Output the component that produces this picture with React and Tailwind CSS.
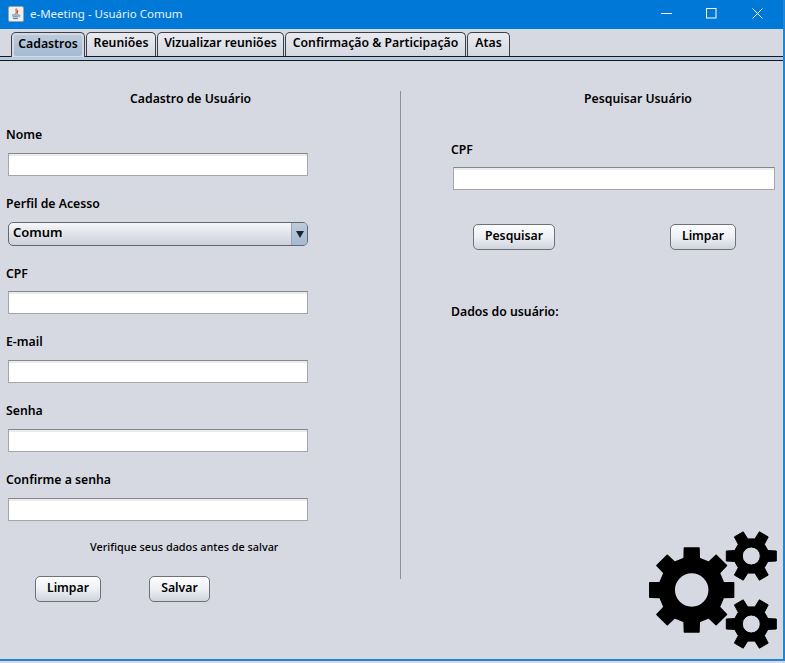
import React from 'react';

const font = "font-['Noto_Sans','Open_Sans',sans-serif]";

// gear outline, teeth are trapezoids around a root circle
const gearPath = (cx, cy, teeth, outer, root, hole, start, tip, base) => {
    const pts = [];
    const step = (Math.PI * 2) / teeth;
    for (let i = 0; i < teeth; i++) {
        const a = i * step + start;
        const w = step * tip;
        const b = step * base;
        pts.push([a - b, root], [a - w, outer], [a + w, outer], [a + b, root]);
    }
    const xy = pts.map(([a, r]) => `${(cx + Math.cos(a) * r).toFixed(1)} ${(cy + Math.sin(a) * r).toFixed(1)}`);
    return `M${xy.join('L')}Z M${cx - hole} ${cy}a${hole} ${hole} 0 1 0 ${hole * 2} 0a${hole} ${hole} 0 1 0 ${-hole * 2} 0Z`;
};

const Gears = () => (
    <svg width="135" height="125" viewBox="0 0 135 125" className="block" aria-hidden="true">
        <path fillRule="evenodd" strokeLinejoin="round" stroke="#000" strokeWidth="1.5" d={gearPath(43.7, 62, 8, 42.5, 32.5, 17.5, 0, 0.22, 0.3)} fill="#000" />
        <path fillRule="evenodd" strokeLinejoin="round" stroke="#000" strokeWidth="1" d={gearPath(103.3, 28, 6, 25.5, 17.5, 9, 0, 0.19, 0.3)} fill="#000" />
        <path fillRule="evenodd" strokeLinejoin="round" stroke="#000" strokeWidth="1" d={gearPath(103.3, 96, 6, 25.5, 17.5, 9, 0, 0.19, 0.3)} fill="#000" />
    </svg>
);

const JavaIcon = () => (
    <svg width="16" height="16" viewBox="0 0 16 16" className="block" aria-hidden="true">
        <rect x="0.5" y="0.5" width="15" height="15" rx="1.5" fill="#eef0f2" stroke="#9aa4ad" />
        <path d="M8.5 2.5C6.5 4.5 10 5.5 7.5 8M10 4C8.5 5.2 10.5 6 9 7.6" fill="none" stroke="#d9541e" strokeWidth="1.1" />
        <path d="M4 9h7M4.5 10.8h6M5 12.6h5" stroke="#4d7ea8" strokeWidth="1" />
        <path d="M11 9.2c1.6-.3 1.6 1.5 0 1.6" fill="none" stroke="#4d7ea8" strokeWidth="0.8" />
    </svg>
);

const TitleBar = () => (
    <div className="flex h-[29px] items-center bg-[#0078d7] pb-[1px] pl-[8px]">
        <JavaIcon />
        <span className={`ml-[6px] text-[11.5px] leading-none text-[#e8f2fb] ${font}`}>e-Meeting - Usuário Comum</span>
        <div className="ml-auto flex items-center pr-[20px] pb-[1px]">
            <svg width="11" height="11" viewBox="0 0 11 11" className="block" aria-hidden="true">
                <path d="M0 5.5h11" stroke="#fff" />
            </svg>
            <svg width="11" height="11" viewBox="0 0 11 11" className="ml-[34px] block" aria-hidden="true">
                <rect x="0.5" y="0.5" width="9.5" height="9.5" fill="none" stroke="#fff" />
            </svg>
            <svg width="11" height="11" viewBox="0 0 11 11" className="ml-[35px] block" aria-hidden="true">
                <path d="M.5.5l10 10M10.5.5l-10 10" stroke="#fff" />
            </svg>
        </div>
    </div>
);

const Tab = ({ label, width, active }) => (
    <div
        className={`flex items-center justify-center rounded-t-[5px] border border-b-0 border-[#3c4048] text-[12.25px] font-semibold text-black ${font} ${width} ${
            active ? 'relative z-10 -mb-[1px] h-[25px] bg-[#d6d9e2] p-[2px] pb-[1px]' : 'h-[24px] bg-gradient-to-b from-[#e9ebf0] to-[#d6d9e2] pb-[3px]'
        }`}
    >
        {active ? (
            <span className="flex h-full w-full items-center justify-center rounded-[2px] bg-gradient-to-b from-[#bccbdb] to-[#a3bad2] pb-[2px]">{label}</span>
        ) : (
            label
        )}
    </div>
);

const TabBar = () => (
    <div className="bg-[#d6d9e2] pt-[3px]">
        <div className="flex gap-[1px] pl-[11px]">
            <Tab label="Cadastros" width="w-[74px]" active />
            <Tab label="Reuniões" width="w-[70px]" />
            <Tab label="Vizualizar reuniões" width="w-[127px]" />
            <Tab label="Confirmação & Participação" width="w-[181px]" />
            <Tab label="Atas" width="w-[43px]" />
        </div>
        <div className="h-[5px] border-y border-[#14181f] bg-[#b8cce0]" />
    </div>
);

const Label = ({ children, className = '' }) => (
    <div className={`text-[12.25px] leading-[16px] font-semibold text-black ${font} ${className}`}>{children}</div>
);

const Field = ({ className = '' }) => (
    <input
        type="text"
        className={`block h-[23px] border border-[#a4a6ab] border-t-[#85878c] bg-white shadow-[inset_0_2px_0_#ececec] outline-none ${className}`}
    />
);

const Button = ({ label, width, className = '' }) => (
    <button
        type="button"
        className={`h-[26px] rounded-[5px] border border-[#6d7178] bg-gradient-to-b from-[#fdfdfe] via-[#eef0f4] to-[#cfd3dd] pb-[2px] text-[12.25px] font-semibold text-black ${font} ${width} ${className}`}
    >
        {label}
    </button>
);

const App = () => (
    <div className="relative h-[663px] w-[785px] overflow-hidden bg-[#d6d9e2]">
        <div className="h-[661px] border-r-2 border-b-2 border-[#1e86d8]">
            <TitleBar />
            <TabBar />
            <div className="flex">
                {/* cadastro */}
                <div className="mt-[30px] h-[488px] w-[401px] shrink-0 border-r border-[#8d9097] pl-[6px]">
                    <Label className="ml-[124px]">Cadastro de Usuário</Label>
                    <Label className="mt-[20px]">Nome</Label>
                    <Field className="mt-[10px] ml-[2px] w-[300px]" />
                    <Label className="mt-[20px]">Perfil de Acesso</Label>
                    <div className={`mt-[10px] ml-[2px] flex h-[24px] w-[300px] items-stretch overflow-hidden rounded-[5px] border border-[#63676e] bg-gradient-to-b from-[#f6f7f9] to-[#ccd0da] text-[13px] font-semibold text-black ${font}`}>
                        <span className="flex-1 pl-[4px] leading-[18px]">Comum</span>
                        <span className="flex w-[16px] items-center justify-center border-l border-[#9aa4b2] bg-gradient-to-b from-[#bccbdb] to-[#a3bad2]">
                            <svg width="8" height="7" viewBox="0 0 8 7" aria-hidden="true">
                                <path d="M0 0h8L4 7z" fill="#1b2430" />
                            </svg>
                        </span>
                    </div>
                    <Label className="mt-[20px]">CPF</Label>
                    <Field className="mt-[9px] ml-[2px] w-[300px]" />
                    <Label className="mt-[20px]">E-mail</Label>
                    <Field className="mt-[10px] ml-[2px] w-[300px]" />
                    <Label className="mt-[20px]">Senha</Label>
                    <Field className="mt-[10px] ml-[2px] w-[300px]" />
                    <Label className="mt-[20px]">Confirme a senha</Label>
                    <Field className="mt-[10px] ml-[2px] w-[300px]" />
                    <div className={`mt-[18px] ml-[84px] text-[10.85px] leading-[16px] font-medium text-black ${font}`}>
                        Verifique seus dados antes de salvar
                    </div>
                    <div className="mt-[21px] ml-[29px] flex gap-[48px]">
                        <Button label="Limpar" width="w-[66px]" />
                        <Button label="Salvar" width="w-[61px]" />
                    </div>
                </div>

                {/* pesquisa */}
                <div className="min-w-0 flex-1 pt-[30px] pl-[50px]">
                    <Label className="ml-[133px]">Pesquisar Usuário</Label>
                    <Label className="mt-[35px]">CPF</Label>
                    <Field className="mt-[9px] ml-[2px] w-[322px]" />
                    <div className="mt-[34px] ml-[22px] flex gap-[115px]">
                        <Button label="Pesquisar" width="w-[82px]" />
                        <Button label="Limpar" width="w-[66px]" />
                    </div>
                    <Label className="mt-[54px]">Dados do usuário:</Label>
                    <div className="mt-[208px] ml-[197px]">
                        <Gears />
                    </div>
                </div>
            </div>
        </div>
    </div>
);

export default App;
